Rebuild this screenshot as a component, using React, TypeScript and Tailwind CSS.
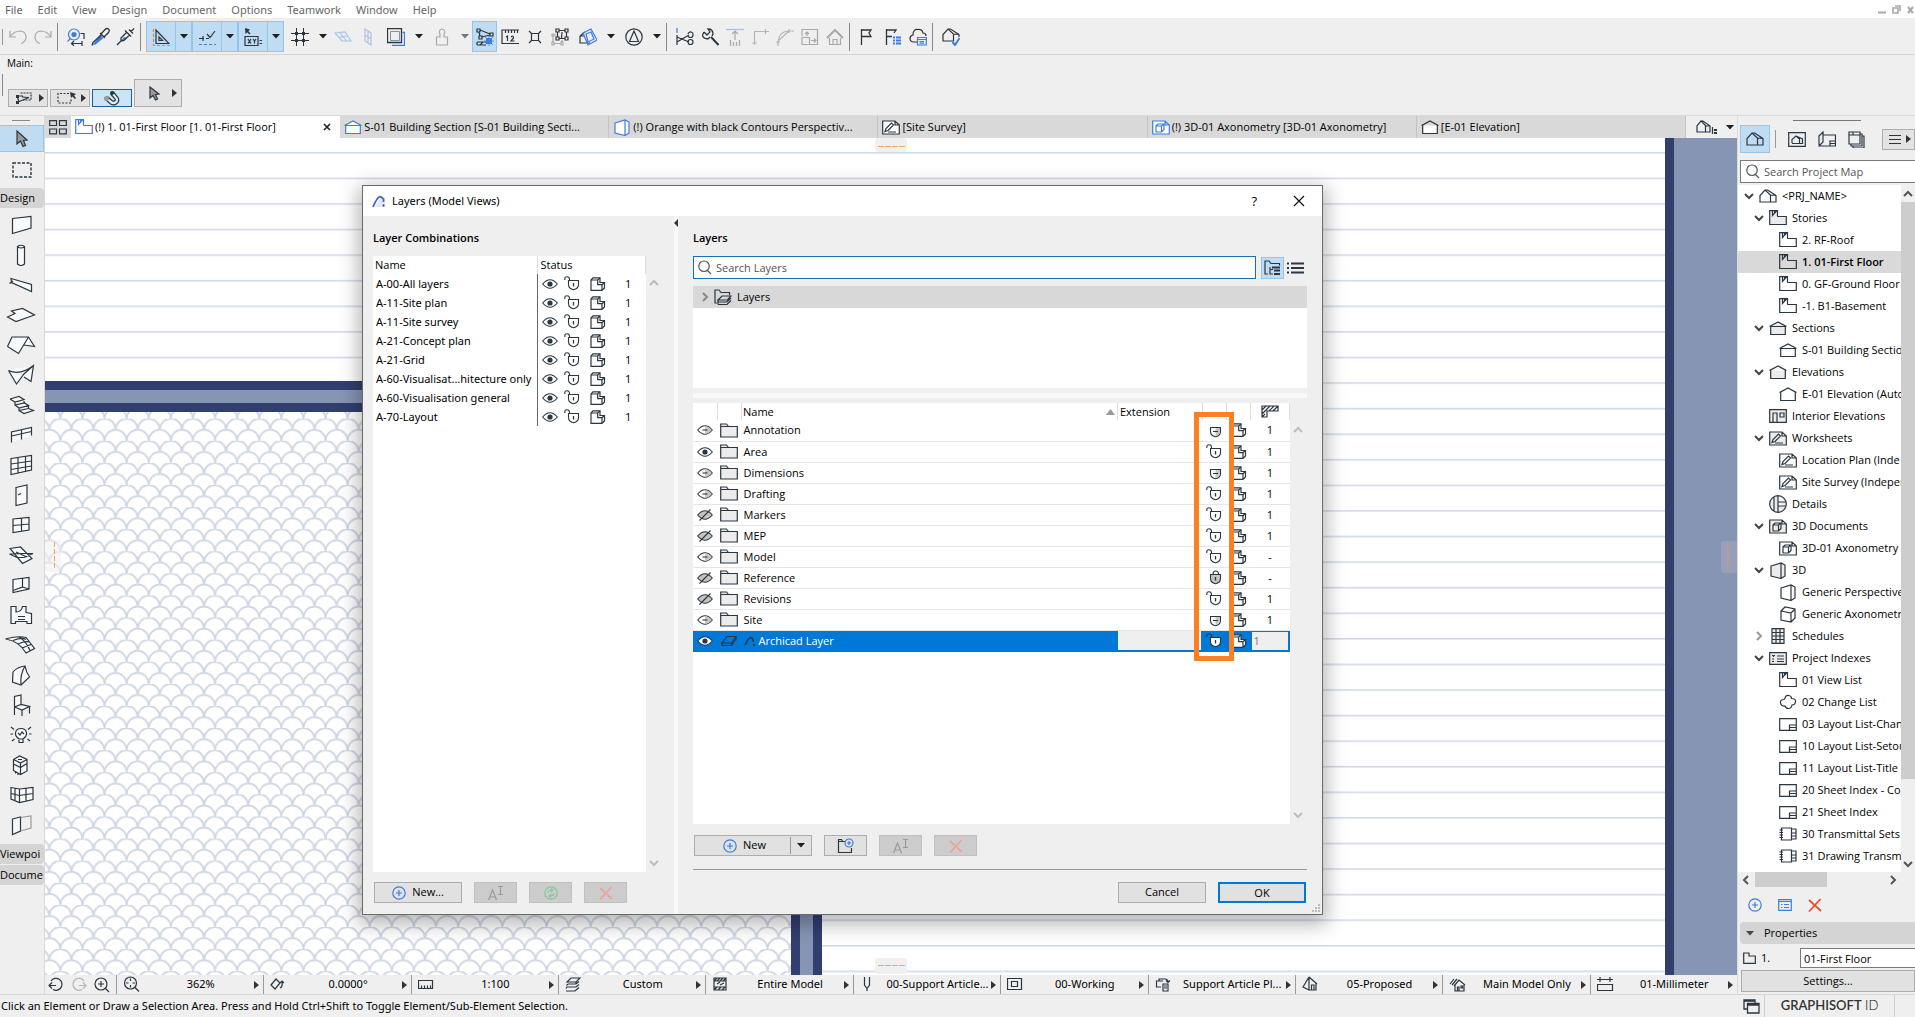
import React from "react";

const INK = "#2b3640";
const BLUE = "#3b7de0";
const GRAY = "#a9a9a9";

type IconProps = {
  w?: number;
  h?: number;
  d?: string;
  color?: string;
  fill?: string;
  d2?: string;
  color2?: string;
  sw?: number;
  children?: React.ReactNode;
};

function Icon({ w = 18, h = 18, d, color = INK, fill = "none", d2, color2 = BLUE, sw = 1.2, children }: IconProps) {
  return (
    <svg width={w} height={h} viewBox={`0 0 ${w} ${h}`} fill="none" strokeWidth={sw} className="block shrink-0" aria-hidden="true">
      {d && <path d={d} stroke={color} fill={fill} />}
      {d2 && <path d={d2} stroke={color2} />}
      {children}
    </svg>
  );
}

const Down = ({ color = "#1f1f1f" }: { color?: string }) => (
  <Icon w={8} h={5}>
    <path d="M0 0H8L4 4.500Z" fill={color} />
  </Icon>
);
const Right = () => (
  <Icon w={5} h={8}>
    <path d="M0 0V8L5 4Z" fill="#333" />
  </Icon>
);
const Chevron = ({ dir, color = "#555" }: { dir: "up" | "down" | "left" | "right"; color?: string }) => {
  const d = { up: "M1 7L5 3L9 7", down: "M1 3L5 7L9 3", left: "M7 1L3 5L7 9", right: "M3 1L7 5L3 9" }[dir];
  return <Icon w={10} h={10} d={d} color={color} sw={2} />;
};

/* ---------- shared glyphs ---------- */
const PlusCircle = () => <Icon w={14} h={14} d="M7 .8a6.200 6.200 0 1 1 0 12.400a6.200 6.200 0 1 1 0-12.400ZM7 4V10M4 7H10" color={BLUE} />;
const CrossRed = ({ faded = false }: { faded?: boolean }) => (
  <Icon w={14} h={14} d="M1 2L13 13M12.500 1L1 13.500" color={faded ? "#e8a598" : "#e8502e"} sw={1.8} />
);
const Rename = () => (
  <Icon w={18} h={16} d="M1.500 15L5.500 5L9.500 15M3 12H8M11 1.500H13L13.500 2L14 1.500H16M13.500 2V9M11 9.500H13L13.500 9L14 9.500H16" color="#9a9a9a" />
);
const Arc = () => (
  <Icon w={14} h={13}>
    <path d="M8 3H13V12H3Z" fill="#e3e8f4" />
    <path d="M1 12Q5 3 7 2T11.500 4V7" stroke="#3f68b8" strokeWidth="1.800" />
    <path d="M11.500 9.500V11.500" stroke="#27406f" strokeWidth="1.800" />
  </Icon>
);
const House = ({ fill = "none" }: { fill?: string }) => (
  <Icon w={18} h={14} d="M1 13V6.500L6 1L11.500 6V13ZM6 1L8.500 1L17 6.500V13H11.500M11.500 6L17 6.500M8.500 1L17 6.500" fill={fill} />
);
const storyD = "M.7.7H8.500V6Q8.500 6.500 9 6.500H17.300V14.500H.7ZM3.500 1V5.500L7.500 1M5.500 1V3";
const Story = ({ color = INK, fill = "none" }: { color?: string; fill?: string }) => <Icon w={18} h={16} d={storyD} color={color} fill={fill} />;
const Section = ({ color = INK, fill = "none" }: { color?: string; fill?: string }) => (
  <Icon w={18} h={15} d="M.5 5.500L9 1L17.500 5.500M1.700 5.500H16.300V13.500H1.700Z" color={color} fill={fill} />
);
const Elevation = ({ fill = "none" }: { fill?: string }) => <Icon w={18} h={15} d="M.5 5.500L9 1L17.500 5.500M1.700 5V13.500H16.300V5L9 1Z" fill={fill} />;
const Sheet = ({ color = INK, fill = "none" }: { color?: string; fill?: string }) => (
  <Icon w={18} h={15}>
    <path d="M.7 1H13L17.300 5V14H.7ZM13 1V5H17.300" stroke={color} fill={fill} />
    <path d="M3 11.500L4 8.500L9.500 3L11.500 5L6 10.500ZM6 12H14" stroke={color} />
  </Icon>
);
const Doc3D = ({ color = INK, fill = "none" }: { color?: string; fill?: string }) => (
  <Icon w={18} h={15}>
    <path d="M.7 1H13L17.300 5V14H.7ZM13 1V5H17.300" stroke={color} fill={fill} />
    <path d="M4 6H9.500V12H4ZM4 6L6 4H12V9.500L9.500 12M9.500 6L12 4" stroke={color} />
  </Icon>
);
const Persp = ({ color = INK, fill = "none" }: { color?: string; fill?: string }) => (
  <Icon w={18} h={17} d="M2 4L12 1L16 3V14L12 16.500L2 14ZM12 1V16.500" color={color} fill={fill} />
);
const Axo = () => <Icon w={18} h={17} d="M2 5L6 1L16 3V12L12 16L2 14ZM2 5L12 7L16 3M12 7V16" />;
const Interior = () => <Icon w={18} h={14} d="M.7.7H17.300V13.300H.7ZM4 13V4H8V13M11 4H15V8H11Z" fill="#ececec" />;
const Detail = () => <Icon w={18} h={18} d="M9 .7A8.300 8.300 0 1 1 9 17.300A8.300 8.300 0 1 1 9 .7ZM5 2V16M9 1V7H17M9 7V11H17M9 11V17" fill="#ececec" />;
const Schedule = () => <Icon w={18} h={16} d="M3 .7H15V15.300H3ZM3 4.500H15M3 8H15M3 11.500H15M7 .7V15M11 .7V15" fill="#ececec" />;
const Index = () => <Icon w={18} h={13} d="M.7.7H17.300V12.300H.7ZM3 3.500H6M4.500 3V5M8 4H15M3 7H5M8 7H15M3 9.500H5M8 9.500H15" fill="#ececec" />;
const Cloud = () => <Icon w={18} h={16} d="M6 4Q7 .7 10 1.500Q12.500 2 12.500 4.500Q17 4.500 16.500 8Q16 11 13 11Q12.500 14.500 9.500 14.500Q7 14.500 6 12Q2 12.500 1.500 9Q1 5.500 5 5.500Z" />;
const Layout = () => <Icon w={18} h={13} d="M.7.7H17.300V12.300H.7ZM10.500 12V7H17M10.500 9.500H17" />;
const Transmit = () => <Icon w={18} h={14} d="M2.500 1H12.500V13H2.500ZM12.500 2H17V12H12.500M12.500 6H17M12.500 9H17M.5 3H4M.5 5.500H4M.5 8H4M.5 10.500H4" />;

/* ---------- layer status glyphs ---------- */
type Vis = "on" | "off" | "mixed";
const Eye = ({ v, inverse = false }: { v: Vis; inverse?: boolean }) => (
  <Icon w={16} h={12} sw={1.1}>
    <path d="M.7 6Q8-2.500 15.300 6Q8 14.500.7 6Z" stroke={inverse ? "#173a5c" : INK} fill={inverse ? "#fff" : v === "off" ? "#c4c4c4" : "#fff"} />
    {v === "mixed" && <path d="M8 2.300Q12 2.500 14.500 6Q12 9.500 8 9.700Z" fill="#c8c8c8" />}
    {v === "mixed" && <path d="M5.500 6H10.500" stroke={INK} />}
    {v === "on" && <circle cx="8" cy="6" r="2.600" fill={INK} />}
    {v === "off" && <path d="M2.500 11.500L13.500.5" stroke={INK} />}
  </Icon>
);
type LockState = "open" | "mixed" | "closed";
const Lock = ({ v }: { v: LockState }) => (
  <Icon w={16} h={15} sw={1.1}>
    {v === "open" && <path d="M.8 4V2.800Q.8.800 3 .8T5.500 2.800V4.500" stroke={INK} />}
    {v === "closed" && <path d="M7 5.500V4Q7 1 9.700 1T12.500 4V5.500" stroke={INK} />}
    <path d="M4.500 4.500H14.500V8.500Q14.500 12.500 9.500 13.800Q4.500 12.500 4.500 8.500Z" stroke={INK} fill={v === "closed" ? "#c4c4c4" : "#fff"} />
    {v === "mixed" && <path d="M9.500 5H14V8.500Q13.800 12 9.500 13.200Z" fill="#c8c8c8" />}
    {v === "mixed" ? <path d="M7 8.500H12" stroke={INK} /> : <path d="M9.500 7V10.500" stroke={INK} strokeWidth="1.300" />}
  </Icon>
);
const Solid = () => (
  <Icon w={16} h={14}>
    <path d="M1 3L3 .8H10V5.500H14.500V11L12 13.300H1Z" fill="#fff" stroke={INK} strokeWidth="1.200" />
    <path d="M1 3H7.700V7.700H12V13M7.700 3L10 1M12 7.700L14.500 5.500" stroke={INK} strokeWidth="1.200" />
  </Icon>
);
const Folder = () => <Icon w={18} h={15} d="M.7 14V1H6.500L8.500 3.500H17.300V14ZM.7 3.500H8.500" fill="#ececec" />;

/* ---------- menu and toolbars ---------- */
const menus = ["File", "Edit", "View", "Design", "Document", "Options", "Teamwork", "Window", "Help"];

function MenuBar() {
  return (
    <header className="flex h-[18px] shrink-0 items-center justify-between bg-white pl-[5px] pr-px font-['Noto_Sans',sans-serif] text-[11px] text-[#666]">
      <nav className="flex gap-[15px] pt-px">
        {menus.map((m) => (
          <button key={m} type="button" className="leading-[18px]">{m}</button>
        ))}
      </nav>
      <div className="flex items-center gap-[6px]">
        <button type="button" aria-label="Minimize"><Icon w={9} h={9} d="M1 7.500H9" color={GRAY} sw={2} /></button>
        <button type="button" aria-label="Restore"><Icon w={9} h={9} d="M1 3H6V8H1ZM3 1H8V6" color={GRAY} sw={1.6} /></button>
        <button type="button" aria-label="Close"><Icon w={7} h={9} d="M1 2L6 8M6 2L1 8" color={GRAY} sw={2} /></button>
      </div>
    </header>
  );
}

const Cell = ({ label, children }: { label: string; children: React.ReactNode }) => (
  <button type="button" aria-label={label} className="flex h-[31px] w-[25px] shrink-0 items-center justify-center">{children}</button>
);
const DropCell = ({ label, gray = false, children }: { label: string; gray?: boolean; children: React.ReactNode }) => (
  <div className="flex h-[31px] w-[46px] shrink-0">
    <button type="button" aria-label={label} className="flex w-8 items-center justify-center">{children}</button>
    <button type="button" aria-label={`${label} options`} className="flex w-[14px] items-center justify-center"><Down color={gray ? "#777" : "#1f1f1f"} /></button>
  </div>
);
const ToggleCell = ({ label, children }: { label: string; children: React.ReactNode }) => (
  <div className="flex h-[31px] w-[46px] shrink-0 border border-[#93c6ec] bg-[#c0dcf3]">
    <button type="button" aria-label={label} className="flex flex-1 items-center justify-center border-r border-[#93c6ec]">{children}</button>
    <button type="button" aria-label={`${label} options`} className="flex w-[15px] items-center justify-center"><Down /></button>
  </div>
);
const Rule = () => <div className="ml-[2px] mr-[5px] h-7 w-px shrink-0 bg-[#888]" />;

function Toolbar() {
  return (
    <div className="flex h-[37px] shrink-0 items-center overflow-hidden border-b border-[#d6d6d6] pl-[2px] pt-px">
      <div className="mr-[2px] h-4 w-px bg-[#999]" />
      <Cell label="Undo"><Icon d="M1 3V9H7M1 9Q5 3 11 3Q17 3.500 17 9Q17 14 12 15.500" color={GRAY} /></Cell>
      <Cell label="Redo"><Icon d="M17 3V9H11M17 9Q13 3 7 3Q1 3.500 1 9Q1 14 6 15.500" color={GRAY} /></Cell>
      <Rule />
      <Cell label="Find"><Icon d="M13.500 5.500H17V11M4.500 15.500H15M15 13V18M7 13L4.500 15.500L7 18" d2="M7 1A5.500 5.500 0 1 1 7 12A5.500 5.500 0 1 1 7 1M3.500 10.500L.5 13.500"><circle cx="7" cy="6.500" r="2.600" fill={BLUE} /></Icon></Cell>
      <Cell label="Pick up">
        <Icon w={19} h={19}>
          <path d="M9.500 8L12.500 11L4.500 17.500L1.500 18Z" fill={BLUE} />
          <path d="M9 6L14 11M10.500 7.500L2 15.500L1 18.500M14 2.500Q16 .8 17.500 2T17.500 5.500L13 10L10 7Z" stroke={INK} fill="none" strokeWidth="1.300" />
        </Icon>
      </Cell>
      <Cell label="Inject">
        <Icon w={19} h={19}>
          <path d="M8 10L11 11L7 14.500L5 14Z" fill={BLUE} />
          <path d="M13 2.500L17 6.500M15 4.500L18 1.500M9 3.500L15 9.500M10.500 5.500L5 11V14L8 13.500L13.500 8M5 14L1 18" stroke={INK} strokeWidth="1.300" />
        </Icon>
      </Cell>
      <Rule />
      <ToggleCell label="Guide lines"><Icon d="M4 2L17 15.500H4ZM7 9L10.500 12.500H7Z"><path d="M1.500 1V17.500H18" stroke="#e08a3c" strokeDasharray="3 2" /></Icon></ToggleCell>
      <ToggleCell label="Snap guides"><Icon d="M1 10.500H6M5 8V13M8 10.500H11M9 6L12 9.500L17 3"><path d="M1 16.500H18" stroke={BLUE} strokeDasharray="3 2" /></Icon></ToggleCell>
      <ToggleCell label="Tracker">
        <Icon d="M1 8.500H14V17.500H1ZM4 11L7 15.500M7 11L4 15.500M9 11L10.500 13L12 11M10.500 13V15.500M15.500 12.500H18M15.500 15.500H18"><path d="M1 0L6 1.500L1.500 6Z" fill={INK} /><path d="M3 3L6 6" stroke={INK} strokeWidth="1.600" /></Icon>
      </ToggleCell>
      <DropCell label="Grid snap"><Icon d="M5.500 0V18M12.500 0V18M0 5.500H18M0 12.500H18" sw={1}><g fill={INK}><rect x="4" y="4" width="3" height="3" /><rect x="11" y="4" width="3" height="3" /><rect x="4" y="11" width="3" height="3" /><rect x="11" y="11" width="3" height="3" /></g></Icon></DropCell>
      <Cell label="Editing plane"><Icon d="M1 5L11 4L17 13H8ZM4.500 9L14 8M6 4.500L12.500 13" color="#a9c3e8" /></Cell>
      <Cell label="Vertical plane"><Icon d="M6 1V13L12 17V5ZM9 3V15M6 7L12 11" color="#a9c3e8" /></Cell>
      <DropCell label="Trace"><Icon d="M.5.5H14.500V14.500H.5Z" d2="M5 17.500H17.500V4.500H15.500" sw={1.300}><path d="M3.500 3.500H12.500V12.500H3.500Z" stroke="#8a9299" strokeWidth="1" /></Icon></DropCell>
      <DropCell label="Reserve" gray><Icon d="M9 1A3 3 0 0 1 11 6V9H14.500V17H3.500V9H7V6A3 3 0 0 1 9 1Z" color={GRAY} /></DropCell>
      <button type="button" aria-label="Suspend groups" aria-pressed="true" className="flex h-[31px] w-[25px] shrink-0 items-center justify-center border border-[#93c6ec] bg-[#c0dcf3]">
        <Icon d="M1 1H4V4H1ZM4 2L14 6M14 5H17V8H14ZM3 4L4 8M3 8H6V11H3ZM6 9L14 7M1 14H10M1 17H10M1 14V17M4 17L7 14" sw={1.200}><rect x="10" y="10" width="6" height="6" fill={BLUE} /><path d="M13 8V18M8 13H18M9 9L17 17M17 9L9 17" stroke={BLUE} strokeWidth=".8" /></Icon>
      </button>
      <Cell label="Measure"><Icon d="M18 2H1V15.500H18M4.500 2V5M7.500 2V5M10.500 2V5M13.500 2V5M16.500 2V5M5 9L6.500 8V13M10 9Q12.500 7 12.500 10L10 13H13.500" /></Cell>
      <Cell label="Intersection"><Icon d="M5.500 5.500H12.500V12.500H5.500ZM3 3L5.500 5.500M15 3L12.500 5.500M3 15L5.500 12.500M15 15L12.500 12.500" /></Cell>
      <Cell label="Group"><Icon d="M5 1H8V4H5ZM14 1H17V4H14ZM5 9H8V12H5ZM14 9H17V12H14ZM8 2.500H14M6.500 4V9M15.500 4V9M8 10.500H14M10.500 10L11 4"><path d="M1 6H3V8H1ZM1 14H3V17H1ZM10 14H12V17H10ZM3 7H5M2 8V14M3 15.500H10M11 12V14" stroke={GRAY} /></Icon></Cell>
      <DropCell label="Trim"><Icon d="M1 8L6 4M1 8V15H11M1 8H5" d2="M4 5L12 1L18 12L9 17ZM7 6L12 4L15 11L9 14Z" /></DropCell>
      <DropCell label="Compass"><Icon d="M9 .8A8.200 8.200 0 1 1 9 17.200A8.200 8.200 0 1 1 9 .8ZM9 3L13.500 13.500H4.500Z" /></DropCell>
      <Rule />
      <Cell label="Split"><Icon d="M1 7V17M1 9L13 14M1 14L13 7M12 6A2.200 2.200 0 1 1 17 7A2.200 2.200 0 1 1 12 7M12 14A2.200 2.200 0 1 1 17 14A2.200 2.200 0 1 1 12 14" d2="M1 0V5" /></Cell>
      <Cell label="Adjust"><Icon d="M3 4L6 7L9 4L7 1Q12 1 12 6L11 8M3 4Q-1 10 7 11M7 11L9 9" sw={1.300}><path d="M10 9L17.500 17" stroke={INK} strokeWidth="2" /></Icon></Cell>
      <Cell label="Elevate"><Icon d="M9 3V12M6 6L9 3L12 6M4.500 12V18M7.500 14V18M10.500 14V18M13.500 12V18" color={GRAY} d2="M0 1.500H18" color2="#9dc0ee" /></Cell>
      <Cell label="Intersect"><Icon d="M3.500 17V3.500H18M1 15H6M14.500 1V6" color="#b5b5b5" /></Cell>
      <Cell label="Fillet"><Icon d="M2 18V14Q3 4 12 3H18M2 13L13 3M13 1V5M0 14H4" color="#b5b5b5" /></Cell>
      <Cell label="Resize"><Icon d="M1 8V1.500H16.500V16.500H9M1 9.500H8.500V16.500H1ZM6 8V4M4 6L6 4L8 6M10 12.500H15M13 10.500L15 12.500L13 14.500" color={GRAY} /></Cell>
      <Cell label="Roof trim"><Icon d="M3.500 10V16.500H14.500V10M7 16V11.500H11V16" color={GRAY}><path d="M1 10L9 2L17 10" stroke={GRAY} strokeWidth="2" /></Icon></Cell>
      <Rule />
      <Cell label="Issue"><Icon d="M2.500 1V17M2.500 2H12L10 5L12 8.500H2.500" sw={1.300} /></Cell>
      <Cell label="Issue list"><Icon d="M2.500 1V17M2.500 2H12L10 5M2.500 8.500H8" sw={1.300}><path d="M9 9.500H11M12 9.500H17M9 12.500H11M12 12.500H17M9 15.500H11M12 15.500H17" stroke={BLUE} strokeWidth="2" /></Icon></Cell>
      <Cell label="Issue cloud"><Icon d="M8 14H5Q1 14 1 10.500Q1 7.500 4 7Q4 1 9 1.500Q13 1 14 5Q17 5 17 8" d2="M8.500 9.500H17.300V17H8.500ZM8.500 11.500H17M10.500 13.500H15M10.500 15.200H15" /></Cell>
      <Rule />
      <Cell label="Model check"><Icon d="M1 13V6.500L6 1L11.500 6V13ZM6 1L8.500 1L17 6.500V9M11.500 6L17 6.500"><path d="M10.500 14L13 17L17.500 10" stroke={BLUE} strokeWidth="2" /></Icon></Cell>
    </div>
  );
}

function InfoBar() {
  const box = "flex h-[18px] w-10 items-center justify-between border border-[#adadad] bg-[#e3e3e3] pl-[6px] pr-[3px]";
  return (
    <div className="flex h-[61px] shrink-0 flex-col justify-between border-b border-[#dadada] pb-[8px] pl-[2px]">
      <div className="pl-[5px] pt-px text-[10px] leading-[14px]">Main:</div>
      <div className="flex items-end gap-[2px]">
        <div className="mb-[11px] mr-[3px] h-[22px] w-px bg-[#888]" />
        <button type="button" aria-label="Selection method" className={box}>
          <Icon w={17} h={12} d="M2 4L4 10M4 4H8M3 10L14 5.500M7 5L14 5.500"><path d="M5.500 1H16V8H8" stroke={INK} strokeDasharray="2 1" /><rect x="1" y="3" width="3" height="3" fill={INK} /><rect x="1" y="9" width="3" height="3" fill={INK} /></Icon>
          <Right />
        </button>
        <button type="button" aria-label="Marquee method" className={box}>
          <Icon w={19} h={12}><path d="M12 1.500H1V11H14V7" stroke={INK} strokeDasharray="2 1.500" /><path d="M13 0L19 2L17 3.500L19 6L18 7L15.500 4.500L14 6Z" fill={INK} /></Icon>
          <Right />
        </button>
        <button type="button" aria-label="Magnet" aria-pressed="true" className="flex h-[18px] w-10 items-center justify-center border border-[#1d5f9e] bg-[#cce4f7]">
          <Icon w={16} h={15}>
            <path d="M7 3.500L9.500 1L14 6.500Q16 10 13 12.500Q10 15 6.500 13L2 9L4 6L8.500 10Q10 10.500 11 9.500T10.500 7.500Z" stroke={INK} fill="#e6eef5" />
            <circle cx="8" cy="2" r="2" fill={INK} />
            <circle cx="2.500" cy="7.500" r="2.500" fill="#999" />
          </Icon>
        </button>
        <button type="button" aria-label="Arrow" className="flex h-[28px] w-12 items-center justify-between border border-[#adadad] bg-[#e3e3e3] pl-[14px] pr-[4px]">
          <Icon w={11} h={15} d="M1 1V12L4 9.500L6.500 14L8.500 13L6.500 8.500L10 8Z" fill="#999" />
          <Right />
        </button>
      </div>
    </div>
  );
}

/* ---------- tool palette ---------- */
const tools: [string, string, string?][] = [
  ["Wall", "M12.500 8.500L31 6.500V18L12.500 23.500Z"],
  ["Column", "M17.500 6.500Q21 4 24.500 6.500V24Q21 27 17.500 24ZM17.500 7Q21 9 24.500 7"],
  ["Beam", "M11 8.500L31.500 14.500V21.500L11.500 12.500ZM11.500 12.500L9.500 13.500L13 11"],
  ["Slab", "M7.500 17L15 13.500L11.500 11L22.500 8.500L34.500 15L16 21.500Z"],
  ["Roof", "M7.500 16.500L12 7H28.500L34.500 16.500L24 15M28.500 7L18.500 23.500L7.500 16.500"],
  ["Shell", "M8.500 10.500Q20 16 33.500 5.500L31 21.500L24 17M8.500 10.500L16.500 24L24 14L33.500 5.500"],
  ["Stair", "M10 9L19 6.500L24 9.500L15 12L10 9M15 12V15L24.500 13L28.500 15.500L19 18L15 15M24 9.500V13M19 18V20.500L28.500 18.500L33.500 20.500L24 23.500L19 20.500M28.500 15.500V18.500"],
  ["Railing", "M11.500 22.500V12L31.500 7.500V15.500M11.500 16L31.500 11.500M21.500 9.500V19.500"],
  ["Curtain Wall", "M11 8.500L31.500 5.500V20L11 24.500ZM11 14L31.500 11M11 19.500L31.500 16M18 7.500V23M25.500 6.500V21.500"],
  ["Door", "M16 7.500L27 5V23L16 25.500ZM18 15L21 13.500"],
  ["Window", "M13 9L29 7.500V20L13 22.500ZM21.500 8.200V21M13 15.500L29 14"],
  ["Skylight", "M10 8.500L20.500 7L32 18.500L22.500 23.500ZM9.500 14L20 13.500L33 13.500L24 17.500H17L9.500 14M16 12L27 17"],
  ["Opening", "M13 9.500L29 7.500V19L13 22.500ZM22.500 8.500V17L13 20.500M22.500 17L29 19"],
  ["Object", "M11 6.500H16V12Q21.500 12 22.500 6.500H26V12.500L31.500 13.500V23.500H27V21.500H15.500V23.500H11ZM18 16.500H25M18 19.500H25"],
  ["Mesh", "M5.500 9Q18 5.500 26 7.500L34.500 18.500L26 23Q19 11 5.500 9M13 10.500Q22 7 26 9.500M18 14Q25 10.500 30 12M22 18L31 14.500M19 7Q26 11 30 20.500"],
  ["Morph", "M13 12Q17 7 25 6Q26 12 29.500 17L21 25L12.500 22ZM25 6Q20 14 21 25"],
  ["Furniture", "M14.500 25V6.500L21 5V15M14.500 17L21 14.500L29.500 16.500L22 20L14.500 17M22 20V26M29.500 16.500V23.500"],
  ["Lamp", "M19 19Q15 16 15.500 13Q16 8.500 21 8.500T26.500 13Q27 16 23 19ZM19 20V22.500H23V19M18 13L20 15L22 12L24 14M11 7L14 9.500M31 7L28 9.500M10.500 14H13M29 14H31.500M12 21L14.500 19M30 21L27.500 19"],
  ["Equipment", "M13.500 9.500L19.500 6L27 9.500V21L20.500 24.500L13.500 20.500ZM13.500 9.500L20.500 13L27 9.500M20.500 13V24.500M13.500 14L20.500 17.500L27 13.500M15.500 21V23.500M18 23V25M18 9.500H22"],
  ["Grid Element", "M11 7.500L19.500 9L33 7.500V19.500L19.500 22.500L11 19ZM19.500 9V22.500M11 13.500L19.500 15.500L33 13.500M15 8V20.500M26 8V21"],
  ["Zone", "M12.500 9L20.500 7V21L12.500 24.500Z", "M20.500 7.500L31 6V18L20.500 21"],
];

const PaletteHeading = ({ children }: { children: React.ReactNode }) => (
  <div className="mb-px h-5 whitespace-nowrap rounded-r bg-[#d4d4d4] text-[11px] leading-5">{children}</div>
);

function Palette() {
  return (
    <aside className="flex w-[45px] shrink-0 flex-col border-r border-[#d8d8d8]">
      <div className="mx-3 mb-[4px] mt-[4px] h-px w-[18px] shrink-0 bg-[#888]" />
      <button type="button" aria-label="Arrow tool" aria-pressed="true" className="flex h-[27px] shrink-0 items-center justify-center border border-l-0 border-[#93c6ec] bg-[#c0dcf3]">
        <Icon w={12} h={18} d="M1 1V14L4.500 11L7 16.500L9.500 15.500L7.500 10.500L11 10Z" fill="#999" />
      </button>
      <button type="button" aria-label="Marquee tool" className="flex h-9 shrink-0 items-center justify-center">
        <Icon w={20} h={16}><path d="M1 1H19V15H1Z" stroke={INK} strokeWidth="1.400" strokeDasharray="3 1.500" /></Icon>
      </button>
      <PaletteHeading>Design</PaletteHeading>
      <div className="mb-[4px] mt-px flex flex-col">
        {tools.map(([name, d, d2]) => (
          <button key={name} type="button" aria-label={name} className="h-[30px]">
            <Icon w={44} h={30} d={d} fill="#f8f9fa" d2={d2} color2="#999" />
          </button>
        ))}
      </div>
      <PaletteHeading>Viewpoi</PaletteHeading>
      <PaletteHeading>Docume</PaletteHeading>
    </aside>
  );
}

/* ---------- tabs and canvas ---------- */
const tabs: { icon: React.ReactNode; label: string }[] = [
  { icon: <Section color={BLUE} fill="#fff" />, label: "S-01 Building Section [S-01 Building Secti..." },
  { icon: <Persp color={BLUE} fill="#fff" />, label: "(!) Orange with black Contours Perspectiv..." },
  { icon: <Sheet fill="#fff" />, label: "[Site Survey]" },
  { icon: <Doc3D color={BLUE} fill="#fff" />, label: "(!) 3D-01 Axonometry [3D-01 Axonometry]" },
  { icon: <Elevation fill="#fff" />, label: "[E-01 Elevation]" },
];

function Tabs() {
  return (
    <div className="flex h-[22px] shrink-0 bg-[#d9d9d9] text-[11px]">
      <button type="button" aria-label="Tab overview" className="flex w-[26px] items-center justify-center">
        <Icon w={18} h={16} d="M.7 1.700H7.500V6.500H.7ZM10.500 1.700H17.300V6.500H10.500ZM.7 10H7.500V14.800H.7ZM10.500 10H17.300V14.800H10.500Z" />
      </button>
      <div className="grid min-w-0 flex-1 grid-cols-6">
        <div className="flex items-center bg-white pl-[4px] pr-[9px]">
          <button type="button" className="flex min-w-0 flex-1 items-center gap-[2px] whitespace-nowrap"><Story color={BLUE} />(!) 1. 01-First Floor [1. 01-First Floor]</button>
          <button type="button" aria-label="Close tab"><Icon w={8} h={8} d="M1 1L7 7M7 1L1 7" color="#222" sw={1.600} /></button>
        </div>
        {tabs.map((t) => (
          <button key={t.label} type="button" className="flex min-w-0 items-center gap-[2px] whitespace-nowrap border-r border-[#c4c4c4] pl-[4px]">
            {t.icon}
            {t.label}
          </button>
        ))}
      </div>
      <button type="button" aria-label="Navigator" className="flex w-[51px] items-center justify-between bg-[#efefef] pl-[10px] pr-[3px]">
        <Icon w={22} h={14} d="M1 12V6L5 1L9.500 5.500V12ZM5 1H7L14 6V12H9.500M9.500 6H14M16.500 7V14"><path d="M18 10H21M18 13H21" stroke={INK} strokeWidth="1.800" /></Icon>
        <Down />
      </button>
    </div>
  );
}

function Canvas() {
  return (
    <div className="relative flex min-h-0 flex-1 bg-white">
      <svg width="100%" height="100%" className="block min-w-0 flex-1" aria-hidden="true">
        <defs>
          <pattern id="lines" x="0" y="14" width="40" height="25.580" patternUnits="userSpaceOnUse">
            <rect width="40" height="1.600" fill="#d3d9e8" />
          </pattern>
          <pattern id="scales" x="4.300" y="15.500" width="22.100" height="22.100" patternUnits="userSpaceOnUse">
            <path d="M0 11.050A11.050 11.050 0 0 1 22.100 11.050M-11.050 22.100A11.050 11.050 0 0 1 11.050 22.100M11.050 22.100A11.050 11.050 0 0 1 33.150 22.100" fill="none" stroke="#d0d6e4" strokeWidth="1.900" />
          </pattern>
        </defs>
        <rect width="100%" height="100%" fill="url(#lines)" />
        <rect x="0" y="243" width="777" height="594" fill="#303f6e" />
        <rect x="0" y="252" width="768" height="585" fill="#8695b4" />
        <rect x="0" y="265" width="755" height="572" fill="#303f6e" />
        <rect x="0" y="274" width="746" height="563" fill="#fff" />
        <rect x="0" y="274" width="746" height="563" fill="url(#scales)" />
        <rect x="0" y="402" width="16" height="32" rx="3" fill="#f0f0f0" fillOpacity=".6" />
        <path d="M9.500 404V432" stroke="#eda766" strokeDasharray="5 2" />
        <rect x="830" y="0" width="32" height="14" rx="3" fill="#f0f0f0" />
        <path d="M833 8.500H860" stroke="#eda766" strokeDasharray="6 1" />
        <rect x="830" y="820" width="32" height="16" rx="3" fill="#f0f0f0" />
        <path d="M833 827.500H860" stroke="#eda766" strokeDasharray="6 1" />
      </svg>
      <div className="flex w-[72px] shrink-0 items-center justify-end border-l-[9px] border-[#303f6e] bg-[#8695b4]">
        <Icon w={16} h={32}><rect width="16" height="32" rx="3" fill="#97a0b8" /><path d="M7 3V30" stroke="#d99a6c" strokeDasharray="5 2" /></Icon>
      </div>
    </div>
  );
}

const segs: { icon: string; label: string }[] = [
  { icon: "M7.500 1A6 6 0 1 1 7.500 13A6 6 0 1 1 7.500 1M12 11.500L16 15.500M7.500 2.500V5M7.500 9V11.500M3 7H5.500M9.500 7H12", label: "362%" },
  { icon: "M1 9L6 3L10 7L5 13ZM10 12Q13 11 12 5M10 7L12 5L14 7", label: "0.0000°" },
  { icon: "M.5 4.500H14.500V12.500H.5ZM3.500 12V9.500M6.500 12V9.500M9.500 12V9.500M12.500 12V9.500", label: "1:100" },
  { icon: "M2 6L6 2H15L11 6ZM1.500 9.500L3 8H11L14 5.500M1 12.500L2 11H11L14 8.500M1 15H10L14 11.500M11 6L11 8", label: "Custom" },
  { icon: "M2 2H14V14H2ZM2 5H14M2 11H14M2 5L5 2M5 5L8 2M8 5L11 2M11 5L14 2M2 14L5 11M6 14L9 11M10 14L13 11M5 8L8 6M8 9L12 7", label: "Entire Model" },
  { icon: "M4.500 1V9L7 12.500L9.500 9V1M7 12.500V15", label: "00-Support Article..." },
  { icon: "M.5 2.500H14.500V13.500H.5ZM4.500 5.500H10.500V10.500H4.500Z", label: "00-Working" },
  { icon: "M6 11H1.500V5H8M4 5V3H10Q13 3 13 6M11 4.500L13 6.500L15 4.500M8 8H13V15H8ZM9 10H12M9 12H12", label: "Support Article Pl..." },
  { icon: "M7 1L1 11L7 14M7 1L15 8M7 2V14H14V7M9.500 14V9H12V14", label: "05-Proposed" },
  { icon: "M1 8L5 3M3 9L8 3M5 10L10 4L16 9M6 9V15H15V9M8.500 15V11H10V15M12 10H13.500V12H12Z", label: "Main Model Only" },
  { icon: "M0 3.500H16M3 1V6M13 1V6M.5 8.500H15.500V14.500H.5Z", label: "01-Millimeter" },
];

function StatusBar() {
  return (
    <div className="flex h-[19px] shrink-0 font-['Noto_Sans',sans-serif] text-[11px]">
      <div className="flex w-[71px] shrink-0 items-center gap-[7px] pl-[3px]">
        <button type="button" aria-label="Previous view"><Icon w={16} h={16} d="M3 4A6 6 0 1 1 5 12.500M1 8.500H8M4 5.500L1 8.500L4 11.500" /></button>
        <button type="button" aria-label="Next view"><Icon w={16} h={16} d="M13 4A6 6 0 1 0 11 12.500M15 8.500H8M12 5.500L15 8.500L12 11.500" color="#b5b5b5" /></button>
        <button type="button" aria-label="Zoom in"><Icon w={16} h={16} d="M7 1A6 6 0 1 1 7 13A6 6 0 1 1 7 1M11.500 11.500L15 15M7 4V10M4 7H10" /></button>
      </div>
      {segs.map((s) => (
        <button key={s.label} type="button" className="flex min-w-0 flex-1 items-center whitespace-nowrap border-l border-[#999] pl-[6px] pr-[4px]">
          <Icon w={17} h={17} d={s.icon} />
          <span className="flex-1 pl-[7px] text-center">{s.label}</span>
          <Right />
        </button>
      ))}
    </div>
  );
}

/* ---------- navigator ---------- */
type Node = { lvl: 0 | 1 | 2; icon: React.ReactNode; label: string; open?: boolean; sel?: boolean };
const G = "#ececec";
const nodes: Node[] = [
  { lvl: 0, icon: <House />, label: "<PRJ_NAME>", open: true },
  { lvl: 1, icon: <Story fill={G} />, label: "Stories", open: true },
  { lvl: 2, icon: <Story />, label: "2. RF-Roof" },
  { lvl: 2, icon: <Story />, label: "1. 01-First Floor", sel: true },
  { lvl: 2, icon: <Story />, label: "0. GF-Ground Floor" },
  { lvl: 2, icon: <Story />, label: "-1. B1-Basement" },
  { lvl: 1, icon: <Section fill={G} />, label: "Sections", open: true },
  { lvl: 2, icon: <Section />, label: "S-01 Building Section" },
  { lvl: 1, icon: <Elevation fill={G} />, label: "Elevations", open: true },
  { lvl: 2, icon: <Elevation />, label: "E-01 Elevation (Auto" },
  { lvl: 1, icon: <Interior />, label: "Interior Elevations" },
  { lvl: 1, icon: <Sheet fill={G} />, label: "Worksheets", open: true },
  { lvl: 2, icon: <Sheet />, label: "Location Plan (Inde" },
  { lvl: 2, icon: <Sheet />, label: "Site Survey (Indepen" },
  { lvl: 1, icon: <Detail />, label: "Details" },
  { lvl: 1, icon: <Doc3D fill={G} />, label: "3D Documents", open: true },
  { lvl: 2, icon: <Doc3D />, label: "3D-01 Axonometry (" },
  { lvl: 1, icon: <Persp fill={G} />, label: "3D", open: true },
  { lvl: 2, icon: <Persp />, label: "Generic Perspective" },
  { lvl: 2, icon: <Axo />, label: "Generic Axonometry" },
  { lvl: 1, icon: <Schedule />, label: "Schedules", open: false },
  { lvl: 1, icon: <Index />, label: "Project Indexes", open: true },
  { lvl: 2, icon: <Story />, label: "01 View List" },
  { lvl: 2, icon: <Cloud />, label: "02 Change List" },
  { lvl: 2, icon: <Layout />, label: "03 Layout List-Chan" },
  { lvl: 2, icon: <Layout />, label: "10 Layout List-Setou" },
  { lvl: 2, icon: <Layout />, label: "11 Layout List-Title" },
  { lvl: 2, icon: <Layout />, label: "20 Sheet Index - Co" },
  { lvl: 2, icon: <Layout />, label: "21 Sheet Index" },
  { lvl: 2, icon: <Transmit />, label: "30 Transmittal Sets" },
  { lvl: 2, icon: <Transmit />, label: "31 Drawing Transm" },
];
const indent = { 0: "pl-[6px]", 1: "pl-[16px]", 2: "pl-[26px]" };

const SearchGlyph = () => <Icon w={14} h={15} d="M6 1A5 5 0 1 1 6 11.500A5 5 0 1 1 6 1M9.500 10.500L13 14" color="#555" />;

function Navigator() {
  return (
    <aside className="flex w-[178px] shrink-0 flex-col border-l border-[#dcdcdc] text-[11px]">
      <div className="mx-auto mb-[4px] mt-[4px] h-px w-[68px] shrink-0 bg-[#777]" />
      <div className="flex h-7 shrink-0 items-center pl-[2px]">
        <button type="button" aria-label="Project map" aria-pressed="true" className="flex h-7 w-[30px] items-center justify-center border border-[#93c6ec] bg-[#c0dcf3]"><House /></button>
        <div className="ml-[5px] mr-3 h-[18px] w-px bg-[#999]" />
        <div className="flex items-center gap-3">
          <button type="button" aria-label="View map"><Icon w={18} h={15} d="M.7.7H17.300V14.300H.7ZM4 11V7.500L8 4L11.500 7V11.500H4M8 4L14.500 7V11.500H11.500" /></button>
          <button type="button" aria-label="Layout book"><Icon w={18} h={16} d="M1 14V5L5 1V11L1 15H17.500V4H5M12 15V10H17.500M12 12.500H17.500" /></button>
          <button type="button" aria-label="Publisher"><Icon w={17} h={17} d="M1 1H12V13H1ZM1 4H12M5 1V4M3 13V15H14V3H12M5 15V17H16V5H14" /></button>
        </div>
        <button type="button" aria-label="Navigator menu" className="ml-auto flex h-[21px] w-[33px] items-center justify-between border border-[#adadad] bg-[#e3e3e3] pl-[6px] pr-[3px]">
          <Icon w={12} h={11} d="M0 1.500H12M0 5.500H12M0 9.500H12" />
          <Right />
        </button>
      </div>
      <label className="ml-[2px] mt-[7px] flex h-[23px] shrink-0 items-center gap-[4px] border border-r-0 border-[#7a7a7a] bg-white pl-[5px]">
        <SearchGlyph />
        <input aria-label="Search Project Map" placeholder="Search Project Map" className="w-full min-w-0 bg-transparent pt-px outline-none placeholder:text-[#555]" />
      </label>
      <div className="mt-[2px] flex min-h-0 flex-1">
        <ul className="min-w-0 flex-1 overflow-hidden bg-white">
          {nodes.map((n) => (
            <li key={n.label}>
              <button
                type="button"
                className={`flex h-[22px] w-full items-center overflow-hidden whitespace-nowrap ${indent[n.lvl]} ${n.sel ? "bg-[#d9d9d9] font-semibold" : ""}`}
              >
                <span className="w-[15px] shrink-0">
                  {n.open !== undefined && <Chevron dir={n.open ? "down" : "right"} color={n.open ? "#444" : "#999"} />}
                </span>
                {n.icon}
                <span className="pl-[5px]">{n.label}</span>
              </button>
            </li>
          ))}
        </ul>
        <div className="flex w-[14px] shrink-0 flex-col items-center">
          <button type="button" aria-label="Scroll up" className="flex h-[17px] shrink-0 items-center"><Chevron dir="up" /></button>
          <div className="w-full flex-[577] bg-[#cdcdcd]" />
          <div className="flex-[76]" />
          <button type="button" aria-label="Scroll down" className="flex h-[17px] shrink-0 items-center"><Chevron dir="down" /></button>
        </div>
      </div>
      <div className="flex h-[15px] shrink-0 items-center pl-[3px] pr-[17px]">
        <button type="button" aria-label="Scroll left"><Chevron dir="left" /></button>
        <div className="ml-[4px] h-[15px] w-[72px] bg-[#cdcdcd]" />
        <button type="button" aria-label="Scroll right" className="ml-auto"><Chevron dir="right" /></button>
      </div>
      <div className="flex h-[35px] shrink-0 items-center gap-4 pl-[10px]">
        <button type="button" aria-label="New item"><PlusCircle /></button>
        <button type="button" aria-label="Item settings"><Icon w={14} h={12} d="M.7.7H13.300V11.300H.7ZM.7 2.500H13.300M3 5.500H4.500M6 5.500H11M3 8.500H4.500M6 8.500H11" color={BLUE} /></button>
        <button type="button" aria-label="Delete item"><CrossRed /></button>
      </div>
      <button type="button" className="ml-[2px] flex h-[22px] shrink-0 items-center gap-[10px] rounded-l bg-[#d4d4d4] pl-[6px]"><Down color="#444" />Properties</button>
      <label className="mt-1 flex h-5 shrink-0 items-center pl-[5px]">
        <Icon w={13} h={12} d="M.7 1H6V4H12.300V11.300H.7Z" />
        <span className="w-[44px] pl-[5px]">1.</span>
        <input defaultValue="01-First Floor" className="h-5 min-w-0 flex-1 border border-r-0 border-[#7a7a7a] bg-white pl-[3px] outline-none" />
      </label>
      <button type="button" className="mb-[2px] ml-[3px] mt-[2px] h-[22px] shrink-0 border border-[#adadad] bg-[#e1e1e1]">Settings...</button>
    </aside>
  );
}

/* ---------- dialog ---------- */
const combos = ["A-00-All layers", "A-11-Site plan", "A-11-Site survey", "A-21-Concept plan", "A-21-Grid", "A-60-Visualisat...hitecture only", "A-60-Visualisation general", "A-70-Layout"];
const layers: [string, Vis, LockState, string][] = [
  ["Annotation", "mixed", "mixed", "1"],
  ["Area", "on", "open", "1"],
  ["Dimensions", "mixed", "mixed", "1"],
  ["Drafting", "mixed", "open", "1"],
  ["Markers", "off", "open", "1"],
  ["MEP", "off", "open", "1"],
  ["Model", "mixed", "open", "-"],
  ["Reference", "off", "closed", "-"],
  ["Revisions", "off", "open", "1"],
  ["Site", "mixed", "mixed", "1"],
];

const Btn = ({ cls, label, disabled = false, children }: { cls: string; label?: string; disabled?: boolean; children: React.ReactNode }) => (
  <button
    type="button"
    aria-label={label}
    disabled={disabled}
    className={`flex h-[21px] items-center justify-center gap-[6px] border ${disabled ? "border-[#c0c0c0] bg-[#cccccc]" : "border-[#adadad] bg-[#e1e1e1]"} ${cls}`}
  >
    {children}
  </button>
);

const ScrollCol = () => (
  <div className="flex w-[15px] flex-col items-center justify-between pb-1 pt-[22px]">
    <Chevron dir="up" color="#bdbdbd" />
    <Chevron dir="down" color="#bdbdbd" />
  </div>
);

function Combinations() {
  return (
    <section className="flex w-[311px] shrink-0 flex-col pb-[11px] pl-[10px] pt-[13px]">
      <h2 className="font-semibold leading-[18px]">Layer Combinations</h2>
      <div className="mt-[9px] flex flex-1">
        <div className="w-[273px] bg-white">
          <table className="w-full table-fixed border-collapse">
            <colgroup>
              <col className="w-[164px]" /><col className="w-[26px]" /><col className="w-[21px]" /><col className="w-[28px]" /><col />
            </colgroup>
            <thead>
              <tr className="h-[18px] text-left">
                <th className="border-r border-[#ddd] pl-[2px] font-normal leading-[18px]">Name</th>
                <th colSpan={4} className="border-r border-[#ddd] pl-[3px] font-normal leading-[18px]">Status</th>
              </tr>
            </thead>
            <tbody>
              {combos.map((c) => (
                <tr key={c} className="h-[19px]">
                  <td className="whitespace-nowrap border-r border-[#666] pl-[3px] font-['Noto_Sans',sans-serif] leading-[18px]">{c}</td>
                  <td className="pl-1"><Eye v="on" /></td>
                  <td className="pl-px"><Lock v="open" /></td>
                  <td className="pl-[6px]"><Solid /></td>
                  <td className="pl-[13px] leading-[18px]">1</td>
                </tr>
              ))}
            </tbody>
          </table>
        </div>
        <ScrollCol />
      </div>
      <div className="ml-px mt-[10px] flex gap-3">
        <Btn cls="w-[88px]"><PlusCircle />New...</Btn>
        <Btn cls="w-[43px]" label="Rename combination" disabled><Rename /></Btn>
        <Btn cls="w-[43px]" label="Update combination" disabled><Icon w={14} h={14} d="M7 .8A6.200 6.200 0 1 1 7 13.200A6.200 6.200 0 1 1 7 .8M4 7Q4 4 8.500 4M7 2.500L8.800 4L7 6M10 7Q10 10 5.500 10M7 8L5.200 10L7 11.500" color="#86c79d" /></Btn>
        <Btn cls="w-[43px]" label="Delete combination" disabled><CrossRed faded /></Btn>
      </div>
    </section>
  );
}

function Layers() {
  return (
    <section className="flex min-w-0 flex-1 flex-col pb-[11px] pl-[15px] pr-[15px] pt-[13px]">
      <h2 className="font-semibold leading-[18px]">Layers</h2>
      <div className="mt-[9px] flex h-[23px] items-center">
        <label className="flex h-[23px] flex-1 items-center gap-[4px] border border-[#1a6fb0] bg-white pl-[4px]">
          <SearchGlyph />
          <input aria-label="Search Layers" placeholder="Search Layers" className="w-full bg-transparent pt-px outline-none placeholder:text-[#555]" />
        </label>
        <button type="button" aria-label="Folder view" aria-pressed="true" className="ml-[5px] flex h-[22px] w-[23px] items-center justify-center border border-[#93c6ec] bg-[#c0dcf3]">
          <Icon w={17} h={16} d="M4 14H1V1H5L7 3.500H15.500V5.500M6 7V14H9M6 9.500H9"><path d="M8 7.500H16M10 10.500H16M10 14H16" stroke={INK} strokeWidth="2" /></Icon>
        </button>
        <button type="button" aria-label="List view" className="ml-[3px] mr-[3px]">
          <Icon w={17} h={12}><path d="M0 1.500H2M4 1.500H17M0 6H2M4 6H17M0 10.500H2M4 10.500H17" stroke={INK} strokeWidth="1.800" /></Icon>
        </button>
      </div>
      <div className="mt-[7px] h-[102px] bg-white">
        <button type="button" className="flex h-[22px] w-full items-center bg-[#d8d8d8] pl-[7px]">
          <Chevron dir="right" color="#888" />
          <span className="ml-[4px]"><Icon w={18} h={17} d="M3 14H1V1H5L7 3.500H15.500V6M4 11L8 7H17L13.500 11ZM4 13H13L17 9M4 15.500H13L17 11.500M4 11V15.500" /></span>
          <span className="ml-[5px]">Layers</span>
        </button>
      </div>
      <div className="my-[5px] h-[5px] bg-[#f8f8f8]" />
      <div className="relative flex h-[421px]">
        <div className="w-[597px] bg-white">
          <table className="w-full table-fixed border-collapse">
            <colgroup>
              <col className="w-[24px]" /><col className="w-[24px]" /><col /><col className="w-[85px]" /><col className="w-[24px]" /><col className="w-[24px]" /><col className="w-[39px]" />
            </colgroup>
            <thead>
              <tr className="h-[17px] text-left [&>th]:border-r [&>th]:border-[#e0e0e0] [&>th]:font-normal [&>th]:leading-[17px]">
                <th aria-label="Visibility" />
                <th aria-label="Kind" />
                <th><span className="flex items-center justify-between pl-px pr-[2px]">Name<Icon w={9} h={6}><path d="M0 6H9L4.500 0Z" fill="#999" /></Icon></span></th>
                <th className="pl-[2px]">Extension</th>
                <th aria-label="Lock" />
                <th aria-label="Solid" />
                <th aria-label="Intersection group"><span className="flex justify-center"><Icon w={18} h={13} d="M1 1H17V6H6V12H1ZM1 5L5 1M1 9L9 1M1 12L4 9M8 6L13 1M12 6L17 1" /></span></th>
              </tr>
            </thead>
            <tbody>
              {layers.map(([name, v, l, n]) => (
                <tr key={name} className="h-[21px] border-b border-[#e6e6e6]">
                  <td className="pl-[3px]"><Eye v={v} /></td>
                  <td className="pl-[2px]"><Folder /></td>
                  <td className="pl-[2px] leading-5">{name}</td>
                  <td />
                  <td className="pl-[3px]"><Lock v={l} /></td>
                  <td className="pl-1"><Solid /></td>
                  <td className="text-center leading-5">{n}</td>
                </tr>
              ))}
              <tr className="h-[21px] border border-[#1a6fb0] bg-[#0078d7] text-white">
                <td className="pl-[3px]"><Eye v="on" inverse /></td>
                <td className="pl-[3px]"><Icon w={16} h={12} d="M1 8L6 1.500H15L10.500 8ZM1 8V10.500H10.500L15 4V1.500M10.500 8V10.500" /></td>
                <td className="pl-[2px] leading-5"><span className="flex items-center gap-[3px]"><Icon w={12} h={10} d="M1 9Q5 1 7 1.500T9.500 6M10 8V10" sw={1.500} />Archicad Layer</span></td>
                <td className="pr-[2px]"><div className="h-[19px] bg-[#efefef]" /></td>
                <td className="pl-[3px]"><Lock v="open" /></td>
                <td className="pl-1"><Solid /></td>
                <td className="px-px"><input aria-label="Intersection group number" defaultValue="1" className="block h-[18px] w-full bg-[#efefef] pl-[2px] text-[#777] outline-none" /></td>
              </tr>
            </tbody>
          </table>
        </div>
        <ScrollCol />
        <div className="pointer-events-none absolute left-[501px] top-[9px] h-[249px] w-[40px] border-[5px] border-[#fb8024]" />
      </div>
      <div className="ml-px mt-[11px] flex gap-3">
        <div className="flex h-[21px] w-[118px] items-center border border-[#adadad] bg-[#e1e1e1]">
          <button type="button" className="flex flex-1 items-center justify-center gap-[6px] border-r border-[#999] pl-1"><PlusCircle />New</button>
          <button type="button" aria-label="New options" className="flex h-full w-5 items-center justify-center"><Down /></button>
        </div>
        <Btn cls="w-[43px]" label="New folder"><Icon w={18} h={16} d="M8 3.500H5.500L4.500 1.500H1.500V14.500H14.500V10M1.500 3.500H5.500" d2="M12 1A4 4 0 1 1 12 9A4 4 0 1 1 12 1M12 3V7M10 5H14" /></Btn>
        <Btn cls="w-[43px]" label="Rename layer" disabled><Rename /></Btn>
        <Btn cls="w-[43px]" label="Delete layer" disabled><CrossRed faded /></Btn>
      </div>
      <div className="mt-[13px] h-px bg-[#9a9a9a]" />
      <div className="mt-auto flex justify-end gap-3 pr-px">
        <Btn cls="w-[88px]">Cancel</Btn>
        <button type="button" className="h-[21px] w-[88px] border-2 border-[#0078d7] bg-[#e1e1e1] leading-4">OK</button>
      </div>
    </section>
  );
}

function LayersDialog() {
  return (
    <div role="dialog" aria-label="Layers (Model Views)" className="absolute left-[362px] top-[185px] flex h-[730px] w-[961px] flex-col border border-[#6a6a6a] bg-[#efefef] text-[11px] shadow-[0_6px_18px_4px_rgba(0,0,0,0.28)]">
      <div className="flex h-[30px] shrink-0 items-center bg-white pl-[9px] pr-[17px]">
        <Arc />
        <span className="pl-[6px] font-['Noto_Sans',sans-serif]">Layers (Model Views)</span>
        <div className="ml-auto flex items-center gap-9">
          <button type="button" aria-label="Help" className="text-[13px] leading-4">?</button>
          <button type="button" aria-label="Close"><Icon w={12} h={12} d="M1 1L11 11M11 1L1 11" color="#111" /></button>
        </div>
      </div>
      <div className="flex min-h-0 flex-1">
        <Combinations />
        <div className="w-1 shrink-0 bg-[#f8f8f8] pt-[3px]">
          <Icon w={4} h={8}><path d="M4 0V8L0 4Z" fill="#333" /></Icon>
        </div>
        <Layers />
      </div>
      <div className="absolute bottom-[2px] right-[2px]">
        <Icon w={8} h={8}><path d="M6 0H8V2H6ZM3 3H5V5H3ZM6 3H8V5H6ZM0 6H2V8H0ZM3 6H5V8H3ZM6 6H8V8H6Z" fill="#bbb" /></Icon>
      </div>
    </div>
  );
}

export default function App() {
  return (
    <div className="relative flex h-screen flex-col overflow-hidden bg-[#efefef] font-['Open_Sans',sans-serif] text-black">
      <MenuBar />
      <Toolbar />
      <InfoBar />
      <main className="flex min-h-0 flex-1">
        <Palette />
        <div className="flex min-w-0 flex-1 flex-col">
          <Tabs />
          <Canvas />
          <StatusBar />
        </div>
        <Navigator />
      </main>
      <footer className="flex h-[23px] shrink-0 items-center border-t border-[#d6d6d6] pl-px font-['Noto_Sans',sans-serif] text-[11px]">
        <span className="flex-1 pt-px">Click an Element or Draw a Selection Area. Press and Hold Ctrl+Shift to Toggle Element/Sub-Element Selection.</span>
        <button type="button" aria-label="Windows"><Icon w={17} h={15} d="M12 4V1H1V10H4M1 2H12M4.500 4.500H16V14H4.500ZM4.500 6H16" sw={1.300} /></button>
        <button type="button" className="ml-1 mr-5 h-full w-[131px] border-x border-[#d0d0d0] text-center font-['Lato',sans-serif] text-[13px]"><span className="font-semibold text-[#333]">GRAPHISOFT</span> <span className="font-light">ID</span></button>
      </footer>
      <LayersDialog />
    </div>
  );
}
